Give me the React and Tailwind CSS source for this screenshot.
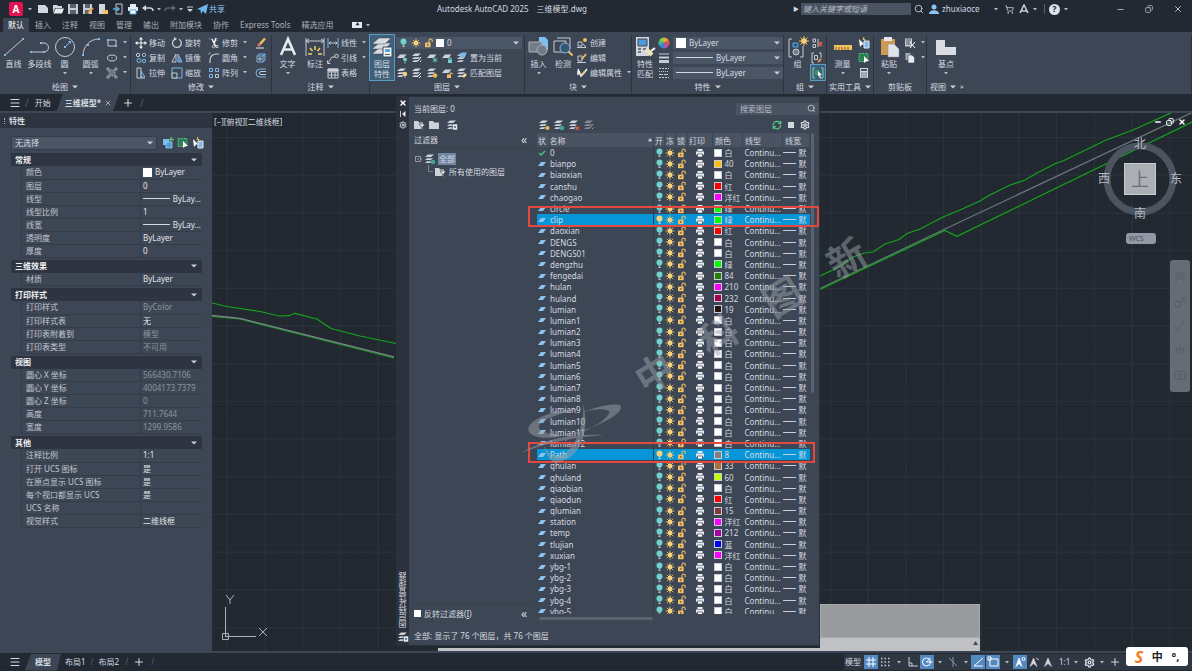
import { useState } from 'react'
import { clsx } from 'clsx'
import { Menu, Plus, X, Search, Settings, RefreshCw, ShoppingCart, Copy, Minus } from 'lucide-react'

const Svg = ({ w = 12, h = 12, children, className }) => (
  <svg width={w} height={h} viewBox={`0 0 ${w} ${h}`} fill="none" stroke="#c6ccd4" className={clsx('shrink-0', className)}>
    {children}
  </svg>
)

const Caret = ({ className }) => (
  <svg width="6" height="4" viewBox="0 0 6 4" className={clsx('shrink-0', className)}>
    <path d="M0 0.5h6L3 3.5z" fill="#c9ced6" />
  </svg>
)

const SmallCaret = () => (
  <svg width="4" height="3" viewBox="0 0 4 3" className="shrink-0">
    <path d="M0 0h4L2 2.5z" fill="#b4bac3" />
  </svg>
)

const Bulb = ({ color = '#6fd3cb' }) => (
  <Svg w={9} h={10}>
    <circle cx="4.5" cy="3.6" r="3" fill={color} stroke="none" />
    <path d="M3.5 6.2h2v1.2h-2z" fill={color} stroke="none" />
    <path d="M3.5 8.3h2" stroke="#e8ecef" />
  </Svg>
)

const Sun = () => (
  <Svg w={10} h={10}>
    <path d="M5 0.5v9M0.5 5h9M1.8 1.8l6.4 6.4M8.2 1.8L1.8 8.2" stroke="#e0b860" strokeWidth="0.9" />
    <circle cx="5" cy="5" r="2.4" fill="#f6d27a" stroke="none" />
  </Svg>
)

const Unlock = () => (
  <Svg w={9} h={10}>
    <path d="M5 5V2.6a1.6 1.6 0 0 1 3.2 0V4" stroke="#f0bf66" strokeWidth="1.1" />
    <path d="M1 4.6h5.6v4.6H1z" fill="#f0bf66" stroke="none" />
    <path d="M3.8 6v1.8" stroke="#4a4436" />
  </Svg>
)

const Printer = () => (
  <Svg w={10} h={10}>
    <path d="M2.5 1h5v2h-5zM1 3.4h8v3.4H1z" fill="#e6e9ed" stroke="none" />
    <path d="M2.5 6h5v3h-5z" fill="#fff" stroke="#3d4654" strokeWidth="0.7" />
  </Svg>
)

const Sheets = ({ children }) => (
  <Svg>
    <g fill="#ced3d9" stroke="none">
      <path d="M1 4l3-2.6h6L7 4z" />
      <path d="M1 7l2-1.8h6L7 7z" />
      <path d="M1 10l2-1.8h5L6 10z" />
    </g>
    {children}
  </Svg>
)

const Sheet = ({ children }) => (
  <Svg>
    <path d="M1 6l3-3.6h6.500L7.500 6z" fill="#ced3d9" stroke="none" />
    {children}
  </Svg>
)

const icons = {
  rect: <Svg><path d="M2 3h8v6H2z" /><path d="M1 2h2v2H1zM9 8h2v2H9z" fill="#7fb8e6" stroke="none" /></Svg>,
  ellipse: <Svg><ellipse cx="6" cy="6" rx="4.500" ry="3" /><circle cx="6" cy="6" r="0.8" fill="#7fb8e6" stroke="none" /></Svg>,
  hatch: <Svg><path d="M3 3h6v6H3z" fill="#6c7683" stroke="#a9b0ba" strokeDasharray="1 1" /><path d="M1 1h2v2H1zM9 1h2v2H9zM1 9h2v2H1zM9 9h2v2H9z" strokeWidth="0.700" /></Svg>,
  move: <Svg><path d="M6 1v10M1 6h10" stroke="#f2f4f6" /><path d="M6 0l2 2.500H4zM6 12l2-2.500H4zM0 6l2.500-2v4zM12 6L9.500 4v4z" fill="#f2f4f6" stroke="none" /></Svg>,
  rotate: <Svg><path d="M8 2.200A4.400 4.400 0 1 1 4.200 2" strokeWidth="1.300" /><path d="M3 0l3 1.800-2.600 2z" fill="#d3d8de" stroke="none" /></Svg>,
  trim: <Svg><path d="M4 2l4 8M8 1L6 7" stroke="#f2f4f6" strokeWidth="1.500" /><path d="M1 2h3M9 1v4" stroke="#7fb8e6" strokeDasharray="1 1" /><circle cx="5.500" cy="9.500" r="1.300" /><circle cx="9" cy="9.500" r="1.200" /></Svg>,
  copy: <Svg><circle cx="3" cy="3" r="1.700" /><circle cx="9" cy="3" r="1.700" stroke="#7fb8e6" /><circle cx="4" cy="8.500" r="2" stroke="#7fb8e6" /><circle cx="9" cy="9" r="1.700" stroke="#7fb8e6" /></Svg>,
  mirror: <Svg><path d="M5 2v8H1z" /><path d="M7 2v8h4z" fill="#4c86bd" stroke="#7fb8e6" /></Svg>,
  fillet: <Svg><path d="M2 11V8a6 6 0 0 1 6-6h3" strokeWidth="1.200" /><path d="M1 3V1h2" stroke="#8a93a0" /></Svg>,
  stretch: <Svg><path d="M2 1v10M2 1h4v10M2 11h8" /><path d="M6 4l4 6H6z" stroke="#7fb8e6" /></Svg>,
  scale: <Svg><path d="M1 1h10v10H1z" stroke="#7fb8e6" /><path d="M1 6h5v5H1z" fill="#3d4654" /></Svg>,
  array: <Svg><path d="M1.500 1.500h3v3h-3zM7.500 1.500h3v3h-3zM1.500 7.500h3v3h-3z" stroke="#7fb8e6" /><path d="M7.500 7.500h3v3h-3z" /></Svg>,
  erase: <Svg><path d="M5 7l5-5.500" stroke="#f3c25c" strokeWidth="2.500" /><path d="M3 9l2-2" stroke="#e8676a" strokeWidth="2.800" /><path d="M1 11h8" stroke="#e6e9ed" /></Svg>,
  explode: <Svg><path d="M2 4h6v6H2zM2 4l2-2h6v6l-2 2M8 4l2-2" stroke="#7fb8e6" /><path d="M4 6h2v2H4z" /></Svg>,
  offset: <Svg><path d="M11 2H5a4 4 0 0 0 0 8h6" stroke="#7fb8e6" /><path d="M11 4.500H6a1.500 1.500 0 0 0 0 3h5" /></Svg>,
  linear: <Svg><path d="M1 1v10M11 1v10" stroke="#7fb8e6" /><path d="M2 6h8M3.500 4.500L2 6l1.500 1.500M8.500 4.500L10 6 8.500 7.500" /></Svg>,
  leader: <Svg><path d="M1 11l4-6h3" /><circle cx="9.500" cy="4" r="1.800" /><path d="M0.500 8.500v3h3" /></Svg>,
  table: <Svg><path d="M1 2h10v9H1zM1 5h10M1 8h10M4.500 2v9M8 5v6" /><path d="M1 2h10v2H1z" fill="#d3d8de" /></Svg>,
  create: <Svg><path d="M2 5h4v4H2zM1 10.500h9" /><circle cx="9" cy="3" r="2" fill="#f3c25c" stroke="none" /><path d="M7 7l3 3" /></Svg>,
  edit: <Svg><path d="M2 4h4v5H2zM1 10.500h9" /><path d="M6 7l4-5" stroke="#f3c25c" strokeWidth="1.800" /></Svg>,
  attr: <Svg><path d="M2 2l3 7 3-3 3-4M2 4v4" stroke="#f2f4f6" strokeWidth="1.600" /><path d="M5 8l4-4" stroke="#f3c25c" strokeWidth="1.500" /></Svg>,
  ungroup: <Svg><path d="M2 2h2.500v3H2zM2 7.500h2.500v3H2zM7 2v8" /><path d="M8 5l3 4M11 5L8 9" stroke="#e2574c" strokeWidth="1.500" /></Svg>,
  groupEdit: <Svg><path d="M3 1H1v10h2M8 1h2v5M3.500 3.500h3v4h-3z" /><path d="M7 10l3-3" stroke="#f08a4b" strokeWidth="2" /></Svg>,
  groupSel: <Svg><path d="M3 1H1v10h2M9 1h2v10H9" stroke="#7ed49a" /><path d="M3 3h4v5H3z" fill="#3b9b62" stroke="none" /><path d="M6 4l4 4H8l1 3-1 .5L7 8.500 6 9.500z" fill="#fff" stroke="none" /></Svg>,
  quickSel: <Svg><path d="M6 4h5v7H6z" fill="#7fb8e6" stroke="#e6e9ed" /><path d="M1 2l5.500 5.500H4L2 10z" fill="#fff" stroke="none" /><path d="M6 0l-1 2.500h2L6 4.500" stroke="#f3c25c" /></Svg>,
  selectAll: <Svg><path d="M1 1.500h9v8H1z" fill="#2f7f55" stroke="#57bb80" strokeDasharray="2 1" /><path d="M6 4l5 5H8.500L6 11z" fill="#fff" stroke="none" /></Svg>,
  calc: <Svg><path d="M2 1h8v10H2z" fill="#d3d8de" stroke="none" /><path d="M3 2h6v2H3z" fill="#4a5362" stroke="none" /><path d="M3 6h6M3 8h6M3 10h6" stroke="#4a5362" strokeDasharray="1.500 0.700" /></Svg>,
  cut: <Svg><path d="M1 1.500h7v8H1z" fill="#c6cbd2" stroke="none" /><path d="M2 3h5M2 5h4M2 7h5" stroke="#4a5362" /><path d="M6 5l5 6M11 5l-5 6" stroke="#f2f4f6" /></Svg>,
  copyClip: <Svg><path d="M1.500 1h5v7h-5z" fill="#a5acb6" stroke="none" /><path d="M4 3h4l2.500 2.500V11H4z" fill="#e6e9ed" stroke="#3d4654" strokeWidth="0.600" /></Svg>,
  wheel: <Svg>
    <g stroke="none">
      <path d="M6 6V0.500A5.500 5.500 0 0 1 10.800 3.200z" fill="#f3a13c" />
      <path d="M6 6l4.800-2.800A5.500 5.500 0 0 1 10.800 8.800z" fill="#e2574c" />
      <path d="M6 6l4.800 2.800A5.500 5.500 0 0 1 6 11.500z" fill="#b253b8" />
      <path d="M6 6v5.500A5.500 5.500 0 0 1 1.200 8.800z" fill="#3f7fd6" />
      <path d="M6 6L1.200 8.800A5.500 5.500 0 0 1 1.200 3.200z" fill="#43b6a5" />
      <path d="M6 6L1.200 3.200A5.500 5.500 0 0 1 6 0.500z" fill="#8ccf4d" />
    </g>
  </Svg>,
  weight: <Svg><path d="M1 2h10" /><path d="M1 5.500h10" strokeWidth="2" /><path d="M1 9.500h10" strokeWidth="3" /></Svg>,
  ltype: <Svg><path d="M1 1.500h10M1 10.500h10" strokeDasharray="2 1" /><path d="M1 4.500h10" strokeDasharray="1 1" /><path d="M1 7.500h10" strokeDasharray="4 1" /></Svg>,
  layOff: <Sheet><circle cx="9" cy="7.500" r="2" fill="#6fd3cb" stroke="none" /><path d="M9 10v1.500" /></Sheet>,
  layIso: <Sheets><path d="M7 9l3-4M9 10l1.500-1.500" stroke="#f2f4f6" /></Sheets>,
  layFreeze: <Sheet><path d="M9 5.500v5M6.800 6.700l4.400 2.600M11.200 6.700L6.800 9.300" stroke="#5cc6b4" /></Sheet>,
  layLock: <Sheet><path d="M7 7.500h4V11H7z" fill="#6fd3cb" stroke="none" /><path d="M8 7.500V6h2v1.500" stroke="#6fd3cb" /></Sheet>,
  laySet: <Sheets><path d="M3 3l3-2.500h5L9 5H4z" fill="#7fb8e6" stroke="none" /></Sheets>,
  layOn: <Sheets><circle cx="9" cy="7" r="2.200" fill="#f6d27a" stroke="none" /><path d="M9 9.500V11" /></Sheets>,
  layUniso: <Sheets><path d="M6 10l4-4M8 11l2-2" stroke="#f2f4f6" /></Sheets>,
  layThaw: <Sheets><circle cx="9" cy="8.500" r="2.200" fill="#f6b94a" stroke="none" /></Sheets>,
  layUnlock: <Sheet><path d="M6 7.500h4V11H6z" fill="#f0bf66" stroke="none" /><path d="M9 7.500V6h2v1.500" stroke="#f0bf66" /></Sheet>,
  layMatch: <Sheets><path d="M7 10l3-3" stroke="#f3d9a0" strokeWidth="2.500" /></Sheets>,
  layNew: <Sheets><circle cx="9.500" cy="9" r="2" fill="#f6b94a" stroke="none" /></Sheets>,
  layNewVp: <Sheets><circle cx="9" cy="9" r="2.300" fill="#46a58f" stroke="none" /></Sheets>,
  layDel: <Sheets><path d="M7.500 7.500l3.500 3.500M11 7.500L7.500 11" stroke="#e2574c" strokeWidth="1.300" /></Sheets>,
  layState: <Sheets><path d="M6.500 5h5v6h-5z" fill="#e6e9ed" stroke="#3d4654" strokeWidth="0.600" /><path d="M8 7h2v2H8z" fill="#4c86bd" stroke="none" /></Sheets>,
  folder: <Svg><path d="M1 2h4l1 1.500h5V10H1z" fill="#ced3d9" stroke="none" /></Svg>,
  folderFilter: <Svg><path d="M0 2h4l1 1.500h4V10H0z" fill="#ced3d9" stroke="none" /><path d="M5 5h6L8.500 8v3l-1-.5V8z" fill="#f2f4f6" stroke="#3d4654" strokeWidth="0.700" /></Svg>,
}

// Larger ribbon pictures
const big = {
  line: <Svg w={22} h={22}><path d="M2 19L20 3" /><path d="M1 18h2v2H1zM19 2h2v2h-2z" fill="#7fb8e6" stroke="none" /></Svg>,
  pline: <Svg w={22} h={22}><path d="M2 16h13a4.500 4.500 0 0 0 0-9h-3" /><path d="M1 15h2v2H1zM11 6h2v2h-2zM14 15h2v2h-2z" fill="#7fb8e6" stroke="none" /></Svg>,
  circle: <Svg w={22} h={22}><circle cx="11" cy="11" r="9.500" /><path d="M11 11l5-5" stroke="#7fb8e6" /><path d="M10 10h2v2h-2zM14 5h3v3z" fill="#7fb8e6" stroke="none" /></Svg>,
  arc: <Svg w={22} h={22}><path d="M3 20C3 10 10 3 19 3" /><path d="M2 18h2v2H2zM7 8h2v2H7zM18 2h2v2h-2z" fill="#7fb8e6" stroke="none" /></Svg>,
  text: <Svg w={22} h={22}><path d="M4 19L11 3l7 16M7 13.500h8" stroke="#e6e9ed" strokeWidth="2.600" /></Svg>,
  dim: <Svg w={22} h={22}><path d="M2 2v18M20 2v18M2 5h18M5 3L2 5l3 2M17 3l3 2-3 2" /><path d="M11 10v4M6 12l2.500 3M16 12l-2.500 3M4 18h4M14 18h4" stroke="#f6cf5f" strokeWidth="1.500" /></Svg>,
  layers: (
    <Svg w={22} h={22}>
      <g fill="#d9dce0" stroke="#3d4654" strokeWidth="0.500">
        <path d="M1 18l7-6h12l-6 6z" />
        <path d="M1 13l7-6h12l-6 6z" />
        <path d="M1 8l7-6h12l-6 6z" />
      </g>
      <path d="M12 11h9v10h-9z" fill="#eef1f4" stroke="#3d4654" />
      <path d="M14 13h5v3h-5z" fill="#5aa7e0" stroke="none" />
      <path d="M14 18.500h5" stroke="#59626f" />
    </Svg>
  ),
  insert: <Svg w={22} h={22}><path d="M11 1h6l3 3v10h-9z" fill="#7fc0ee" stroke="none" /><path d="M1 6h13v10H1z" fill="#737b86" stroke="#a9b0ba" /><circle cx="14" cy="14" r="5" fill="#737b86" stroke="#a9b0ba" /></Svg>,
  detect: <Svg w={22} h={22}><path d="M2 5h12v11H2zM5 2h13v11" /><circle cx="13" cy="12" r="5" fill="#3b5674" stroke="#7fb8e6" /><path d="M16.500 15.500l4 4" stroke="#f0bf66" strokeWidth="2" /></Svg>,
  match: <Svg w={22} h={22}><path d="M2 1h13v19H2z" fill="#d3d8de" stroke="none" /><path d="M4 3h9v7H4z" fill="#4c9bdb" stroke="#3d4654" /><path d="M4 13h3M9 13h3M4 16h3" stroke="#4a5362" strokeWidth="1.500" /><path d="M12 13l6 6" stroke="#f2e2b8" strokeWidth="4" /><path d="M17 15l4-3" stroke="#fff" strokeWidth="2" /></Svg>,
  group: <Svg w={22} h={22}><path d="M5 3H2v18h3M13 21h3V10" /><path d="M6 7h5v4H6z" stroke="#5aa7e0" fill="#2c5a83" /><circle cx="9" cy="16" r="3" fill="#737b86" /><path d="M17 0v10M12 5h10M13.500 1.500l7 7M20.500 1.500l-7 7" stroke="#f3c25c" /><circle cx="17" cy="5" r="2.800" fill="#f6d27a" stroke="none" /></Svg>,
  measure: <Svg w={22} h={22}><path d="M2 9h18v5H2z" fill="#f3c25c" stroke="none" /><path d="M4 11v3M7 11v3M10 11v3M13 11v3M16 11v3" stroke="#7a5c1f" /></Svg>,
  paste: <Svg w={22} h={22}><path d="M3 3h14v16H3z" fill="#d09a4e" stroke="none" /><path d="M6 1h8v4H6z" fill="#e6e9ed" stroke="none" /><path d="M10 8h6l5 5v8H10z" fill="#e0e3e7" stroke="#8a93a0" strokeWidth="0.500" /></Svg>,
  base: <Svg w={22} h={22}><path d="M1 4h9v7h11v8H1z" fill="#d9dce0" stroke="none" /></Svg>,
}

const BigButton = ({ icon, label, caret, width, active }) => (
  <button type="button" className={clsx('flex h-[45px] flex-col items-center', width, active && 'bg-[#3f6078] outline outline-[#5a9cc4]')}>
    <span className="flex h-[24px] items-center">{icon}</span>
    <span className="leading-[10px]">{label}</span>
    {caret && <span className="flex h-[6px] items-end"><SmallCaret /></span>}
  </button>
)

const SmallButton = ({ icon, label, caret }) => (
  <button type="button" className="flex h-[15px] items-center gap-[2px] whitespace-nowrap">
    {icon}
    {label && <span>{label}</span>}
    {caret && <span className="pl-[3px]"><SmallCaret /></span>}
  </button>
)

const Panel = ({ title, width, children, caret = true, arrow, left }) => (
  <section className={clsx('flex shrink-0 flex-col border-r border-[#2c3440]', width)}>
    <div className="flex h-[45px]">{children}</div>
    <div className={clsx('flex h-[15px] items-center gap-[4px]', left ? 'pl-[3px]' : 'justify-center')}>
      <span>{title}</span>
      {caret && <Caret />}
      {arrow && <span className="text-[7px]">»</span>}
    </div>
  </section>
)

const Combo = ({ label, value, prefix, className }) => (
  <div className={clsx('flex h-[12px] items-center gap-[3px] bg-[#4a5566] px-[3px]', className)}>
    {prefix}
    <select aria-label={label} className="h-[12px] min-w-0 flex-1 appearance-none bg-transparent text-[8px] leading-[12px] outline-none">
      <option>{value}</option>
    </select>
    <Caret />
  </div>
)

const menuTabs = ['默认', '插入', '注释', '视图', '管理', '输出', '附加模块', '协作', 'Express Tools', '精选应用']

const TitleBar = () => (
  <header className="grid h-[18px] grid-cols-[437px_1fr_auto] items-center">
    <div className="flex items-center gap-[3px] pl-[9px]">
      <span className="flex size-[14px] items-center justify-center rounded-[2px] bg-[#e4124f] text-[10px] font-bold text-white">A</span>
      <span className="flex w-[8px] justify-center"><SmallCaret /></span>
      <Svg><path d="M1 2h7l3 3v5H1z" fill="#d3d8de" stroke="none" /></Svg>
      <Svg><path d="M1 2h4l1 1h4v2H3L1 10z" fill="#d3d8de" stroke="none" /><path d="M3.500 5.500H12l-2 5H1.500z" fill="#e6e9ed" stroke="none" /></Svg>
      <Svg><path d="M1 1h10v10H1z" fill="#c6cbd2" stroke="none" /><path d="M3 1h6v4H3zM3 7h6v4H3z" fill="#59626f" stroke="none" /></Svg>
      <Svg><path d="M1 1h9v10H1z" fill="#c6cbd2" stroke="none" /><path d="M3 1h5v4H3zM3 7h4v4H3z" fill="#59626f" stroke="none" /><path d="M6 10l5-5" stroke="#f3a13c" strokeWidth="2" /></Svg>
      <Svg><path d="M2 1h6v10H2z" fill="#d3d8de" stroke="none" /><path d="M6 7h5v4H6z" fill="#f3c25c" stroke="none" /></Svg>
      <Svg><path d="M4 1h6v10H4z" /><path d="M1 6h6M5 4l2 2-2 2" stroke="#5aa7e0" strokeWidth="1.500" /></Svg>
      <Svg><path d="M3 1h6v3H3zM1 4h10v4H1z" fill="#e6e9ed" stroke="none" /><path d="M3 7h6v4H3z" fill="#fff" stroke="#5aa7e0" /></Svg>
      <Svg><path d="M1 5h7a3 3 0 0 1 3 3" strokeWidth="1.500" /><path d="M0 5l4-3v6z" fill="#d3d8de" stroke="none" /></Svg>
      <SmallCaret />
      <Svg><path d="M11 5H4a3 3 0 0 0-3 3" stroke="#5b6470" strokeWidth="1.500" /><path d="M12 5L8 2v6z" fill="#5b6470" stroke="none" /></Svg>
      <SmallCaret />
      <Svg w={8} h={8}><path d="M1 2h6" /><path d="M1 4h6L4 7z" fill="#d3d8de" stroke="none" /></Svg>
      <button type="button" className="flex items-center gap-px text-[#8cc4ee]">
        <Svg w={11}><path d="M0 6l11-5-2 10-3-3-2 3-.500-4z" fill="#6fb6ea" stroke="none" /></Svg>
        共享
      </button>
    </div>
    <div className="flex gap-[8px] whitespace-nowrap">
      <span>Autodesk AutoCAD 2025</span>
      <span>三维模型.dwg</span>
    </div>
    <div className="flex items-center pr-[9px]">
      <span className="w-[8px] text-[6px]">▶</span>
      <input type="text" aria-label="搜索" placeholder="键入关键字或短语" className="h-[12px] w-[110px] bg-[#4a5362] px-[2px] text-[8px] italic outline-none placeholder:text-[#b5bbc4]" />
      <Search size={10} className="ml-[3px]" />
      <Svg w={10} h={10} className="ml-[5px]"><circle cx="5" cy="3" r="2.500" fill="#8cc4ee" stroke="none" /><path d="M0 10c0-5 10-5 10 0z" fill="#8cc4ee" stroke="none" /></Svg>
      <span className="ml-[3px] w-[52px]">zhuxiaoce</span>
      <SmallCaret />
      <ShoppingCart size={9} className="ml-[7px]" />
      <Svg w={10} h={10} className="ml-[5px]"><path d="M1 9l4-8 4 8M2 7h6" strokeWidth="1.600" /></Svg>
      <span className="ml-[4px]"><SmallCaret /></span>
      <span className="ml-[7px] h-[10px] border-l border-[#59626f]" />
      <span className="ml-[4px] flex size-[11px] items-center justify-center rounded-full bg-[#e0e3e7] text-[9px] font-bold text-[#222933]">?</span>
      <span className="ml-[4px]"><SmallCaret /></span>
      <button type="button" aria-label="最小化" className="ml-[48px]"><Minus size={9} /></button>
      <button type="button" aria-label="还原" className="ml-[20px]"><Copy size={8} className="-scale-x-100" /></button>
      <button type="button" aria-label="关闭" className="ml-[20px]"><X size={10} /></button>
    </div>
  </header>
)

const Ribbon = () => (
  <div className="flex h-[62px] overflow-hidden bg-[#3d4654] pt-[3px]">
    <Panel title="绘图" width="w-[131px]">
      <BigButton icon={big.line} label="直线" width="w-[27px]" />
      <BigButton icon={big.pline} label="多段线" width="w-[25px]" />
      <BigButton icon={big.circle} label="圆" width="w-[25px]" caret />
      <BigButton icon={big.arc} label="圆弧" width="w-[27px]" caret />
      <div className="pl-[2px]">
        <SmallButton icon={icons.rect} caret />
        <SmallButton icon={icons.ellipse} caret />
        <SmallButton icon={icons.hatch} caret />
      </div>
    </Panel>
    <Panel title="修改" width="w-[141px]">
      <div className="w-[36px] pl-[4px]">
        <SmallButton icon={icons.move} label="移动" />
        <SmallButton icon={icons.copy} label="复制" />
        <SmallButton icon={icons.stretch} label="拉伸" />
      </div>
      <div className="w-[37px] pl-[4px]">
        <SmallButton icon={icons.rotate} label="旋转" />
        <SmallButton icon={icons.mirror} label="镜像" />
        <SmallButton icon={icons.scale} label="缩放" />
      </div>
      <div className="w-[47px] pl-[4px]">
        <SmallButton icon={icons.trim} label="修剪" caret />
        <SmallButton icon={icons.fillet} label="圆角" caret />
        <SmallButton icon={icons.array} label="阵列" caret />
      </div>
      <div className="pl-[4px]">
        <SmallButton icon={icons.erase} />
        <SmallButton icon={icons.explode} />
        <SmallButton icon={icons.offset} />
      </div>
    </Panel>
    <Panel title="注释" width="w-[98px]">
      <BigButton icon={big.text} label="文字" width="w-[31px]" caret />
      <BigButton icon={big.dim} label="标注" width="w-[24px]" />
      <div>
        <SmallButton icon={icons.linear} label="线性" caret />
        <SmallButton icon={icons.leader} label="引线" caret />
        <SmallButton icon={icons.table} label="表格" />
      </div>
    </Panel>
    <Panel title="图层" width="w-[155px]">
      <BigButton icon={big.layers} label={<>图层<br />特性</>} width="w-[24px]" active />
      <div className="flex-1 pr-[2px] pl-[2px]">
        <div className="flex h-[15px] items-center">
          <Combo label="图层" value="0" className="w-full" prefix={<><Bulb /><Sun /><Unlock /><span className="size-[8px] bg-white" /></>} />
        </div>
        <div className="flex gap-[3px]">
          <SmallButton icon={icons.layOff} />
          <SmallButton icon={icons.layIso} />
          <SmallButton icon={icons.layFreeze} />
          <SmallButton icon={icons.layLock} />
          <SmallButton icon={icons.laySet} label="置为当前" />
        </div>
        <div className="flex gap-[3px]">
          <SmallButton icon={icons.layOn} />
          <SmallButton icon={icons.layUniso} />
          <SmallButton icon={icons.layThaw} />
          <SmallButton icon={icons.layUnlock} />
          <SmallButton icon={icons.layMatch} label="匹配图层" />
        </div>
      </div>
    </Panel>
    <Panel title="块" width="w-[107px]">
      <BigButton icon={big.insert} label="插入" width="w-[27px]" caret />
      <BigButton icon={big.detect} label="检测" width="w-[22px]" />
      <div className="pl-[2px]">
        <SmallButton icon={icons.create} label="创建" />
        <SmallButton icon={icons.edit} label="编辑" />
        <SmallButton icon={icons.attr} label="编辑属性" caret />
      </div>
    </Panel>
    <Panel title="特性" width="w-[152px]">
      <BigButton icon={big.match} label={<>特性<br />匹配</>} width="w-[26px]" />
      <div className="flex flex-1 flex-col">
        <div className="flex h-[15px] items-center gap-[3px]">
          {icons.wheel}
          <Combo label="对象颜色" value="ByLayer" className="flex-1" prefix={<span className="size-[10px] bg-white" />} />
        </div>
        <div className="flex h-[15px] items-center gap-[3px]">
          {icons.weight}
          <Combo label="线宽" value="ByLayer" className="flex-1" prefix={<span className="w-[37px] border-t border-[#d3d8de]" />} />
        </div>
        <div className="flex h-[15px] items-center gap-[3px]">
          {icons.ltype}
          <Combo label="线型" value="ByLayer" className="flex-1" prefix={<span className="w-[37px] border-t border-[#d3d8de]" />} />
        </div>
      </div>
    </Panel>
    <Panel title="组" width="w-[43px]">
      <BigButton icon={big.group} label="组" width="w-[27px]" />
      <div>
        <SmallButton icon={icons.ungroup} />
        <SmallButton icon={icons.groupEdit} />
        <div className="bg-[#3f6078] px-px outline outline-[#5a9cc4]"><SmallButton icon={icons.groupSel} /></div>
      </div>
    </Panel>
    <Panel title="实用工具" width="w-[47px]">
      <BigButton icon={big.measure} label="测量" width="w-[31px]" caret />
      <div>
        <SmallButton icon={icons.quickSel} />
        <SmallButton icon={icons.selectAll} />
        <SmallButton icon={icons.calc} />
      </div>
    </Panel>
    <Panel title="剪贴板" width="w-[53px]" caret={false}>
      <BigButton icon={big.paste} label="粘贴" width="w-[30px]" caret />
      <div>
        <SmallButton icon={icons.cut} caret />
        <SmallButton icon={icons.copyClip} caret />
      </div>
    </Panel>
    <Panel title="视图" width="flex-1" left arrow>
      <BigButton icon={big.base} label="基点" width="w-[38px]" caret />
    </Panel>
  </div>
)

const FileTabs = () => (
  <nav className="flex h-[17px] items-center pl-[9px]">
    <button type="button" aria-label="菜单"><Menu size={12} /></button>
    <span className="ml-[4px] text-[10px] text-[#59626f]">/</span>
    <a href="#start" className="ml-[6px]">开始</a>
    <a href="#model" className="ml-[6px] flex h-[17px] items-center gap-[3px] bg-[#3d4654] pr-[7px] pl-[8px] font-bold [clip-path:polygon(6px_0,100%_0,calc(100%-6px)_100%,0_100%)]">
      三维模型*
      <X size={8} />
    </a>
    <button type="button" aria-label="新建图形" className="ml-[3px]"><Plus size={12} /></button>
    <span className="ml-[6px] text-[10px] text-[#59626f]">/</span>
  </nav>
)

const sections = [
  { title: '常规', rows: [['颜色', 'ByLayer', 'swatch'], ['图层', '0'], ['线型', 'ByLay...', 'line'], ['线型比例', '1'], ['线宽', 'ByLay...', 'line'], ['透明度', 'ByLayer'], ['厚度', '0']] },
  { title: '三维效果', rows: [['材质', 'ByLayer']] },
  { title: '打印样式', rows: [['打印样式', 'ByColor', 'dim'], ['打印样式表', '无'], ['打印表附着到', '模型', 'dim'], ['打印表类型', '不可用', 'dim']] },
  { title: '视图', rows: [['圆心 X 坐标', '566430.7106', 'dim'], ['圆心 Y 坐标', '4004173.7379', 'dim'], ['圆心 Z 坐标', '0', 'dim'], ['高度', '711.7644', 'dim'], ['宽度', '1299.9586', 'dim']] },
  { title: '其他', rows: [['注释比例', '1:1'], ['打开 UCS 图标', '是'], ['在原点显示 UCS 图标', '是'], ['每个视口都显示 UCS', '是'], ['UCS 名称', ''], ['视觉样式', '二维线框']] },
]

const PropertiesPanel = () => (
  <aside className="flex w-[212px] shrink-0 flex-col bg-[#3d4654]">
    <h2 className="flex h-[15px] items-center gap-[4px] bg-[#2e3541] pl-[4px] font-bold">
      <span className="h-[6px] border-l border-dotted border-[#a9b0ba]" />
      特性
    </h2>
    <div className="flex items-center gap-[3px] pt-[8px] pb-[3px] pl-[11px]">
      <Combo label="选择" value="无选择" className="h-[14px] w-[146px] border border-[#343c49]" />
      <button type="button" aria-label="切换" className="ml-[2px]"><Svg><path d="M1 2h6v6H1z" fill="#7fb8e6" stroke="none" /><path d="M4 5h6v6H4z" fill="#4c9bdb" stroke="#cfe6f7" strokeWidth="0.600" /><path d="M9 0v5M7 2.500h5" stroke="#57bb80" strokeWidth="1.300" /></Svg></button>
      <button type="button" aria-label="选择对象">{icons.selectAll}</button>
      <button type="button" aria-label="快速选择">{icons.quickSel}</button>
    </div>
    <div className="flex flex-col gap-[2px] pr-[10px] pl-[11px]">
      {sections.map((section) => (
        <section key={section.title}>
          <h3 className="flex h-[13px] items-center justify-between bg-[#2e3541] pr-[5px] pl-[4px] font-bold text-[#eef1f4]">
            {section.title}
            <Caret />
          </h3>
          <table className="ml-[10px] w-[180px] table-fixed border-collapse border-l border-[#343c49]">
            <tbody>
              {section.rows.map(([name, value, kind]) => (
                <tr key={name} className="h-[13px] border-b border-[#343c49] leading-[12px]">
                  <th className="w-[119px] pl-[4px] text-left font-normal text-[#c3c9d1]">{name}</th>
                  <td className={clsx('border-l border-[#343c49] pl-[2px]', kind === 'dim' ? 'text-[#8c949f]' : 'text-[#e1e5e9]')}>
                    <span className="flex items-center gap-[3px]">
                      {kind === 'swatch' && <span className="size-[9px] bg-white" />}
                      {kind === 'line' && <span className="w-[27px] border-t border-[#d3d8de]" />}
                      {value}
                    </span>
                  </td>
                </tr>
              ))}
            </tbody>
          </table>
        </section>
      ))}
    </div>
  </aside>
)

const Drawing = () => (
  <main className="relative min-w-0 flex-1 overflow-hidden bg-[#212830]">
    <svg className="absolute inset-0 h-full w-full">
      <defs>
        <pattern id="minor" x="14.700" y="24" width="7.540" height="7.540" patternUnits="userSpaceOnUse">
          <path d="M0.500 0v8M0 0.500h8" stroke="#232a33" fill="none" />
        </pattern>
        <pattern id="major" x="14.700" y="24" width="37.700" height="37.700" patternUnits="userSpaceOnUse">
          <path d="M0.500 0v38M0 0.500h38" stroke="#2a323b" fill="none" />
        </pattern>
      </defs>
      <rect width="100%" height="100%" fill="url(#minor)" />
      <rect width="100%" height="100%" fill="url(#major)" />
      <g transform="translate(-212 -113)" fill="none" stroke="#16a41c" strokeWidth="1.200">
        <path d="M212 303L227 306.500 260 311.500 279 316 289 315.700 295 313.300 317 319 331 328.500 360 336 396 343.500" />
        <path d="M212 316.500L240 319 394 358" />
        <path d="M212 315.300L240 318.300 394 356.800" stroke="#7b828b" />
        <path d="M820 276L837 268 853 257 864 253 873 252 885 244 899 239.500 907 233.500 920 229 943 217 960 210 980 201 988 196 1009 185.500 1025 180 1037 173 1055 163.700 1064 160.500 1105 140.500 1133 130 1173 112" />
        <path d="M820 288.500L944 229.500 1192 112.500" stroke="#6d747d" />
        <path d="M820 289.500L945 230.500 957 236.300 1192 122" />
      </g>
      <g transform="translate(-212 -113)" fill="none" stroke="#aab0b8">
        <path d="M225.500 607v30M225.500 636.500H256M222.500 633.500h6v6h-6z" />
        <path d="M226 595l4 5 4-5M230 600v4M259 628l8 8M267 628l-8 8" />
      </g>
    </svg>
    <span className="relative pl-[2px] leading-[18px]">[−][俯视][二维线框]</span>
    <div className="absolute top-[5px] right-[6px] flex items-center gap-[4px] text-white">
      <button type="button" aria-label="最小化视口"><Minus size={8} strokeWidth={4} /></button>
      <button type="button" aria-label="还原视口"><Copy size={8} strokeWidth={3} className="-scale-x-100" /></button>
      <button type="button" aria-label="关闭视口"><X size={8} strokeWidth={4} /></button>
    </div>
    <div className="absolute top-[24px] right-[10px] text-[#b4b9c0]">
      <div className="relative grid size-[84px] place-items-center text-[12px] leading-[14px]">
        <svg viewBox="0 0 84 84" className="absolute inset-0">
          <circle cx="42" cy="42" r="33" fill="none" stroke="#4b545f" strokeWidth="7" />
        </svg>
        <span className="absolute top-0">北</span>
        <span className="absolute bottom-0">南</span>
        <span className="absolute left-0">西</span>
        <span className="absolute right-0">东</span>
        <button type="button" className="relative size-[32px] border border-[#c9ccd0] bg-[#abafb4] text-[18px] leading-[28px] text-[#6b7179]">上</button>
      </div>
      <button type="button" className="mt-[12px] ml-[28px] block h-[11px] w-[30px] rounded-[3px] bg-[#9299a4] pl-[3px] text-left text-[7px] leading-[10px] text-[#4a5160]">WCS</button>
    </div>
    <div className="absolute top-[147px] right-[2px] flex h-[132px] w-[20px] flex-col items-center justify-evenly rounded-[3px] bg-[#656c76]">
      <Svg w={14} h={14}><path d="M3 3h8v6H3zM5 5h4v2H5zM2 12l2-2M12 12l-2-2" stroke="#565d67" /></Svg>
      <Svg w={14} h={14}><g stroke="#565d67"><circle cx="5" cy="9" r="3" /><path d="M8 7l4-4M8 3h4v6" /></g></Svg>
      <Svg w={14} h={14}><path d="M3 11L11 3M3 6v5h5M9 3h2v2" stroke="#565d67" /></Svg>
      <Svg w={14} h={14}><path d="M1 7h12M7 2v10M4 4v6M10 4v6" stroke="#565d67" /></Svg>
      <Svg w={14} h={14}><path d="M2 3h10v8H2zM6 5l3 2-3 2z" stroke="#565d67" /></Svg>
    </div>
    <div className="absolute bottom-0 left-[226px] flex w-[542px] flex-col items-end">
      <div className="h-[34px] w-[160px] border border-[#a7a9ad] bg-[#999b9f]" />
      <div className="flex h-[10px] w-[160px] items-center justify-end bg-[#bfc1c5] pr-[2px] text-[5px] text-[#444]">▲</div>
      <div className="h-[3px] w-full bg-[#bfc1c5]" />
    </div>
  </main>
)

const swatches = {
  白: 'bg-white',
  红: 'bg-[#ff0000]',
  绿: 'bg-[#00ff00]',
  蓝: 'bg-[#0000ff]',
  洋红: 'bg-[#ff00ff]',
  40: 'bg-[#ffbf00]',
  84: 'bg-[#268000]',
  210: 'bg-[#ff00ff]',
  232: 'bg-[#a5004f]',
  19: 'bg-[#261313]',
  8: 'bg-[#808080]',
  33: 'bg-[#a6713a]',
  60: 'bg-[#bfff00]',
  15: 'bg-[#803a3a]',
  212: 'bg-[#a500a5]',
}

const layers = [
  ['0', '白'], ['bianpo', '40'], ['biaoxian', '白'], ['canshu', '红'], ['chaogao', '洋红'], ['circle', '绿'],
  ['clip', '绿'], ['daoxian', '红'], ['DENGS', '白'], ['DENGS01', '白'], ['dengzhu', '绿'], ['fengedai', '84'],
  ['hulan', '210'], ['huland', '232'], ['lumian', '19'], ['lumian1', '白'], ['lumian2', '白'], ['lumian3', '白'],
  ['lumian4', '白'], ['lumian5', '白'], ['lumian6', '白'], ['lumian7', '白'], ['lumian8', '白'], ['lumian9', '白'],
  ['lumian10', '白'], ['lumian11', '白'], ['lumian12', '白'], ['Path', '8'], ['qhulan', '33'], ['qhuland', '60'],
  ['qiaobian', '白'], ['qiaodun', '红'], ['qlumian', '15'], ['station', '洋红'], ['temp', '212'], ['tlujian', '蓝'],
  ['xuxian', '洋红'], ['ybg-1', '白'], ['ybg-2', '白'], ['ybg-3', '白'], ['ybg-4', '白'], ['ybg-5', '白'],
]

const LayerTable = () => {
  const [selected, setSelected] = useState(['clip', 'Path'])

  return (
    <table className="h-[484px] w-[273px] table-fixed border-collapse leading-[11px]">
      <colgroup>
        <col className="w-[12px]" />
        <col />
        <col className="w-[11px]" />
        <col className="w-[11px]" />
        <col className="w-[12px]" />
        <col className="w-[25px]" />
        <col className="w-[30px]" />
        <col className="w-[40px]" />
        <col className="w-[27px]" />
      </colgroup>
      <thead>
        <tr className="h-[14px] bg-[#4a5362] text-left whitespace-nowrap [&>th]:border-r [&>th]:border-[#3d4654] [&>th]:font-normal">
          <th className="pl-px">状</th>
          <th><span className="flex items-center justify-between pr-px">名称<span className="text-[4px]">▲</span></span></th>
          <th className="pl-px">开</th>
          <th className="pl-px">冻</th>
          <th className="pl-px">锁</th>
          <th className="pl-px">打印</th>
          <th className="pl-[2px]">颜色</th>
          <th className="pl-[2px]">线型</th>
          <th className="pl-[2px]">线宽</th>
        </tr>
      </thead>
      <tbody>
        {layers.map(([name, color]) => {
          const on = selected.includes(name)
          return (
            <tr key={name} onClick={() => setSelected([name])} className={clsx('h-[11px] whitespace-nowrap', on && 'bg-[#0696d7]')}>
              <td>
                {name === '0' ? (
                  <Svg w={10} h={8}><path d="M2 4l2 2 4-4" stroke="#46c08a" strokeWidth="1.500" /></Svg>
                ) : (
                  <Svg w={10} h={8}><path d="M1 6l3-4h5L6 6z" fill="#8cc4ee" stroke="none" /></Svg>
                )}
              </td>
              <td className="border-r border-[#323b48] pl-px">{name}</td>
              <td className="pl-px"><Bulb color={on ? '#f6d27a' : undefined} /></td>
              <td><Sun /></td>
              <td className="pl-px"><Unlock /></td>
              <td className="pl-[7px]"><Printer /></td>
              <td className="pl-px">
                <span className="flex items-center gap-[3px]">
                  <span className={clsx('size-[8px] shrink-0 border border-[#c9ced6]', swatches[color])} />
                  {color}
                </span>
              </td>
              <td className="pl-[2px]">Continu...</td>
              <td>
                <span className="flex items-center gap-[3px]">
                  <span className="w-[13px] border-t border-[#c9ced6]" />
                  <span>默</span>
                </span>
              </td>
            </tr>
          )
        })}
      </tbody>
    </table>
  )
}

const LayerPalette = () => (
  <div className="absolute top-[96px] left-[396px] flex h-[550px] w-[424px] border border-[#2a313c] bg-[#3d4654]">
    <div className="flex w-[12px] flex-col items-center gap-[3px] bg-[#2b323e] py-[2px]">
      <button type="button" aria-label="关闭"><X size={8} strokeWidth={4} className="text-white" /></button>
      <button type="button" aria-label="自动隐藏"><Svg w={8} h={8}><path d="M1.500 1v6" /><path d="M6.500 1v6L3 4z" fill="#e6e9ed" stroke="none" /></Svg></button>
      <button type="button" aria-label="特性"><Settings size={8} strokeWidth={3} /></button>
      <span className="flex-1" />
      <span className="rotate-180 [writing-mode:vertical-rl]">图层特性管理器</span>
      {icons.layState}
    </div>
    <div className="flex min-w-0 flex-1 flex-col pl-[5px]">
      <div className="flex h-[20px] shrink-0 items-center justify-between pt-[3px]">
        <span>当前图层: 0</span>
        <label className="flex h-[12px] w-[83px] items-center bg-[#4a5362] pr-[3px] pl-[4px]">
          <input type="text" aria-label="搜索图层" placeholder="搜索图层" className="w-full min-w-0 bg-transparent text-[8px] outline-none placeholder:text-[#b5bbc4]" />
          <Search size={9} className="shrink-0" />
        </label>
      </div>
      <div className="flex h-[16px] shrink-0 items-center">
        <div className="flex w-[124px] items-center gap-[2px]">
          {icons.folderFilter}
          {icons.folder}
          <span className="pl-[4px]">{icons.layState}</span>
        </div>
        <div className="flex flex-1 items-center gap-[3px]">
          {icons.layNew}
          {icons.layNewVp}
          {icons.layDel}
          <span className="opacity-50">{icons.layIso}</span>
        </div>
        <div className="flex items-center gap-[6px] pr-[9px]">
          <RefreshCw size={10} strokeWidth={3} className="text-[#57c887]" />
          <span className="size-[6px] bg-[#d3d8de]" />
          <Settings size={10} strokeWidth={3} />
        </div>
      </div>
      <div className="flex h-[489px] shrink-0">
        <div className="flex w-[117px] flex-col">
          <div className="flex h-[15px] items-center justify-between border-b border-[#353e4a] pr-[4px]">
            <span>过滤器</span>
            <span className="text-[12px]">«</span>
          </div>
          <ul className="flex-1 pt-[4px]">
            <li className="flex h-[13px] items-center gap-[2px]">
              <Svg w={8} h={8}><path d="M1.500 1.500h5v5h-5zM3 4h2M6.500 4H8" stroke="#a9b0ba" strokeWidth="0.800" /></Svg>
              {icons.layNewVp}
              <span className="bg-[#7186a0] px-px leading-[12px]">全部</span>
            </li>
            <li className="flex h-[13px] items-center gap-[2px] pl-[13px]">
              <Svg w={6} h={12} className="self-start"><path d="M1.500 0v6.500H6" stroke="#7c8591" /></Svg>
              {icons.folderFilter}
              所有使用的图层
            </li>
          </ul>
          <div className="flex h-[18px] items-center justify-between border-t border-[#353e4a] pr-[4px]">
            <label className="flex items-center gap-[3px]">
              <input type="checkbox" className="size-[7px] appearance-none bg-white" />
              <span>反转过滤器(<u>I</u>)</span>
            </label>
            <span className="text-[12px]">«</span>
          </div>
        </div>
        <div className="ml-[6px]">
          <div className="flex h-[481px]">
            <div className="h-[481px] overflow-hidden"><LayerTable /></div>
            <div className="ml-px h-[260px] w-[3px] rounded bg-[#59636f]" />
          </div>
          <div className="mt-[3px] ml-[2px] h-[3px] w-[114px] rounded bg-[#59636f]" />
        </div>
      </div>
      <p className="pt-[6px] leading-[16px]">全部: 显示了 76 个图层，共 76 个图层</p>
    </div>
    {/* callouts around the two highlighted layers */}
    <div className="absolute top-[109px] left-[131px] h-[21px] w-[291px] border-2 border-[#e2493f]" />
    <div className="absolute top-[345px] left-[131px] h-[21px] w-[287px] border-2 border-[#e2493f]" />
  </div>
)

const Toggle = ({ on, label, children }) => (
  <button type="button" aria-label={label} className={clsx('flex h-[14px] w-[14px] items-center justify-center', on && 'bg-[#5488c0]')}>
    {children}
  </button>
)

const StatusBar = () => (
  <footer className="flex h-[20px] items-center border-t-2 border-[#3d4654] pl-[9px]">
    <button type="button" aria-label="菜单"><Menu size={12} /></button>
    <a href="#m" className="ml-[4px] flex h-[17px] items-center bg-[#3d4654] px-[10px] font-bold [clip-path:polygon(6px_0,100%_0,calc(100%-4px)_100%,0_100%)]">模型</a>
    <a href="#l1" className="ml-[4px]">布局1</a>
    <span className="px-[5px] text-[#59626f]">/</span>
    <a href="#l2">布局2</a>
    <span className="pl-[6px] text-[#59626f]">/</span>
    <button type="button" aria-label="新建布局" className="ml-[5px]"><Plus size={12} /></button>
    <span className="pl-[6px] text-[#59626f]">/</span>
    <div className="ml-auto flex h-[16px] w-[348px] items-center bg-[#2f3743] pl-px">
      <button type="button" className="mr-[3px]">模型</button>
      <Toggle on label="栅格"><Svg><path d="M4 1v10M8 1v10M1 4h10M1 8h10" stroke="#fff" /></Svg></Toggle>
      <Toggle label="捕捉"><Svg><path d="M2 2.500h9M2 6h9M2 9.500h9" strokeDasharray="1.500 2" strokeWidth="1.500" /></Svg></Toggle>
      <span className="flex w-[14px] justify-center"><SmallCaret /></span>
      <Toggle label="正交"><Svg><path d="M2 1v9h9M2 7h3v3" /></Svg></Toggle>
      <Toggle on label="极轴"><Svg><circle cx="5.500" cy="6" r="4" stroke="#fff" /><path d="M5.500 6h6M5.500 6l4-4" stroke="#fff" /></Svg></Toggle>
      <span className="flex w-[12px] justify-center"><SmallCaret /></span>
      <Toggle label="等轴测"><Svg><path d="M6 1v10M2 2l4 4 4 4" stroke="#8a93a0" /></Svg></Toggle>
      <span className="flex w-[11px] justify-center"><SmallCaret /></span>
      <Toggle on label="对象追踪"><Svg><path d="M11 2L2 10h9" stroke="#fff" /></Svg></Toggle>
      <span className="w-px" />
      <Toggle on label="对象捕捉"><Svg><path d="M3 3h8v7H3z" stroke="#fff" /><path d="M1 1h3v3H1z" stroke="#fff" /></Svg></Toggle>
      <span className="flex w-[13px] justify-center"><SmallCaret /></span>
      <Toggle on label="注释可见性"><Svg><path d="M2 10.500L5 2l3 8.500-3-3z" fill="#fff" stroke="#fff" strokeWidth="0.700" /><circle cx="9.500" cy="3" r="1.500" stroke="#fff" /></Svg></Toggle>
      <Toggle label="自动缩放"><Svg><path d="M2 10.500L5.500 2 9 10.500l-3.500-3z" fill="#d3d8de" strokeWidth="0.700" /><path d="M8 2l3 2" /></Svg></Toggle>
      <Toggle label="注释比例"><Svg><path d="M2.500 10.500L6 2l3.500 8.500L6 7.500z" fill="#d3d8de" strokeWidth="0.700" /></Svg></Toggle>
      <span className="px-[4px]">1:1</span>
      <SmallCaret />
      <span className="ml-[6px]"><Settings size={11} strokeWidth={3} /></span>
      <span className="flex w-[14px] justify-center"><SmallCaret /></span>
      <Plus size={12} />
    </div>
  </footer>
)

const Watermark = () => (
  <div className="pointer-events-none absolute inset-0 overflow-hidden opacity-50">
    <div className="absolute top-[290px] left-[619px] flex w-[262px] -rotate-31 justify-between text-[38px] leading-[50px] font-bold text-[#9aa0a8]">
      <span>中</span>
      <span>科</span>
      <span>图</span>
      <span>新</span>
    </div>
    <svg viewBox="0 0 104 64" className="absolute top-[402px] left-[519px] w-[104px]">
      <path d="M47 33C30 38 14 36 10 30 4 18 40 6 60 7 40 12 18 18 20 26c2 6 20 8 40 6C78 24 92 14 90 9c-8-4-24 0-34 4 14-6 40-14 46-9 2 8-24 22-55 29z" fill="#9aa0a8" />
      <path d="M64 2c6 20 2 54-27 59-5 0-10-8-12-17 5 8 12 12 18 9C56 46 66 24 64 2z" fill="#9aa0a8" />
      <path d="M2 51C30 34 60 32 85 33 56 35 30 40 2 51z" fill="#9aa0a8" />
    </svg>
  </div>
)

const App = () => (
  <div className="relative flex h-screen flex-col overflow-hidden bg-[#222933] font-['Noto_Sans','Noto_Sans_CJK_SC',sans-serif] text-[8px] leading-[12px] text-[#d5dae0]">
    <TitleBar />
    <nav className="flex h-[14px] items-center gap-px pl-[3px]">
      {menuTabs.map((tab, i) => (
        <a key={tab} href={`#tab${i}`} className={clsx('px-[5px] leading-[14px]', i === 0 ? 'bg-[#3d4654] text-white' : 'text-[#a9b0ba]')}>{tab}</a>
      ))}
      <span className="ml-[13px] flex items-center gap-[4px]">
        <span className="flex h-[6px] w-[10px] items-center justify-center bg-[#e6e9ed] text-[4px] text-[#222933]">▲</span>
        <SmallCaret />
      </span>
    </nav>
    <Ribbon />
    <FileTabs />
    <div className="flex min-h-0 flex-1 border-t-2 border-[#3d4654]">
      <PropertiesPanel />
      <Drawing />
    </div>
    <StatusBar />
    <LayerPalette />
    <Watermark />
    <div className="absolute right-[4px] bottom-[5px] flex h-[19px] w-[62px] items-center justify-evenly rounded-[3px] bg-white text-[11px] font-bold text-[#222]">
      <span className="text-[16px] text-[#f47a20] italic">S</span>
      <span>中</span>
      <span>°,</span>
    </div>
  </div>
)

export default App
